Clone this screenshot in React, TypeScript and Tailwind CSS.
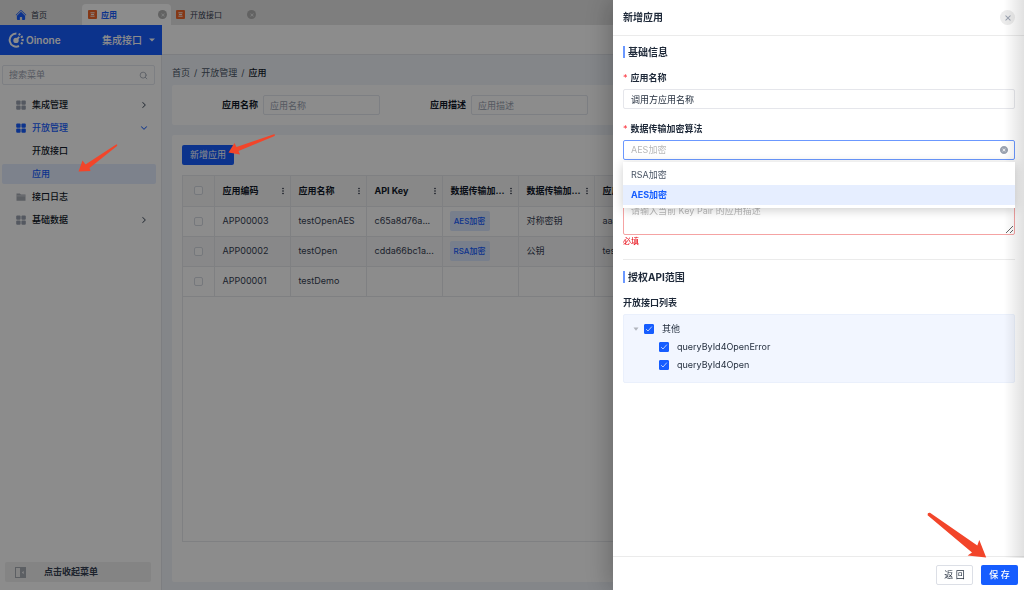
import { useState } from "react"
import { FiSearch } from "react-icons/fi"
import { HiChevronDown, HiChevronRight, HiHome } from "react-icons/hi2"
import { IoMdArrowDropdown } from "react-icons/io"
import { IoCheckmarkSharp, IoClose, IoCloseCircle } from "react-icons/io5"
import { BsThreeDotsVertical } from "react-icons/bs"

const menu = [
  { name: "集成管理", icon: "grid", arrow: "right" },
  { name: "开放管理", icon: "grid", arrow: "down", open: true },
  { name: "开放接口" },
  { name: "应用", active: true },
  { name: "接口日志", icon: "folder" },
  { name: "基础数据", icon: "grid", arrow: "right" },
]

const columns = ["应用编码", "应用名称", "API Key", "数据传输加...", "数据传输加...", "应用描述"]

const rows = [
  { code: "APP00003", name: "testOpenAES", key: "c65a8d76a...", algorithm: "AES加密", type: "对称密钥", desc: "aaa" },
  { code: "APP00002", name: "testOpen", key: "cdda66bc1a...", algorithm: "RSA加密", type: "公钥", desc: "test" },
  { code: "APP00001", name: "testDemo", key: "", algorithm: "", type: "", desc: "" },
]

const algorithms = ["RSA加密", "AES加密"]

const GridIcon = ({ className }: { className: string }) => (
  <svg viewBox="0 0 10 10" className={`size-2.5 ${className}`} fill="currentColor">
    <rect x="0.2" y="0.5" width="4.4" height="4.2" rx="1" />
    <rect x="5.4" y="0.5" width="4.4" height="4.2" rx="1" />
    <rect x="0.2" y="5.5" width="4.4" height="4.2" rx="1" />
    <rect x="5.4" y="5.5" width="4.4" height="4.2" rx="1" />
  </svg>
)

const FolderIcon = () => (
  <svg viewBox="0 0 10 10" className="size-2.5">
    <path d="M0.5 1.4h3.4l1 1.2h4.6v6.2h-9z" fill="#a8adb5" />
    <path d="M0.5 3.9h9" stroke="#e5e7eb" strokeWidth="0.6" />
  </svg>
)

const AppIcon = () => (
  <svg viewBox="0 0 9 9" className="size-[9px]">
    <rect width="9" height="9" rx="1" fill="#f0662b" />
    <path d="M2.4 2.8h4.2M2.9 4.5h3.2M2.4 6.2h4.2" stroke="#fff" strokeWidth="0.9" />
  </svg>
)

const Logo = () => (
  <svg viewBox="0 0 16 16" className="size-4" fill="none" stroke="#fff">
    <path d="M8.4 1.4A6.6 6.6 0 1 0 11 14" strokeWidth="2" />
    <path d="M10.6 2a6.6 6.6 0 0 1 1.8 11" strokeWidth="2.2" strokeDasharray="2 1.3" />
    <circle cx="8" cy="8.4" r="2.7" fill="#fff" stroke="none" />
    <path d="M8 8.4l3.2-3.6" strokeWidth="1.8" />
  </svg>
)

const TabClose = () => (
  <span className="ml-auto flex size-[9px] items-center justify-center rounded-full bg-[#b3b3b3] text-gray-100">
    <IoClose className="size-1.5" />
  </span>
)

const TabBar = () => (
  <nav className="flex h-[25px] shrink-0 items-end bg-[#e6e6e6] text-[8px] text-gray-700">
    <a href="#home" className="flex h-[21px] w-[82px] items-center gap-1 pl-[15px]">
      <HiHome className="size-3 text-[#165dff]" /> 首页
    </a>
    <a href="#app" className="flex h-[21px] w-[89px] items-center gap-1 rounded-t-sm bg-white pl-1.5 pr-1 font-bold text-[#165dff]">
      <AppIcon /> 应用
      <TabClose />
    </a>
    <a href="#api" className="flex h-[21px] w-[85px] items-center gap-[5px] pl-[5px]">
      <AppIcon /> 开放接口
      <TabClose />
    </a>
  </nav>
)

const Sidebar = () => (
  <aside className="flex w-[162px] shrink-0 flex-col border-r border-[#e3e6ec] bg-white">
    <div className="-mr-px flex h-[30px] shrink-0 items-center bg-[#165dff] pl-2 pr-1 text-white">
      <Logo />
      <span className="ml-0.5 text-[10px] font-semibold">Oinone</span>
      <button className="ml-auto flex items-center gap-1 text-[10px] font-medium">
        集成接口 <IoMdArrowDropdown className="size-3" />
      </button>
    </div>

    <label className="ml-0.5 mr-1.5 mt-2.5 flex h-5 items-center rounded-xs border border-[#e3e7ee] px-1.5">
      <input aria-label="搜索菜单" placeholder="搜索菜单" className="min-w-0 flex-1 outline-none placeholder:text-gray-400" />
      <FiSearch className="size-[9px] text-gray-400" />
    </label>

    <ul className="mt-2.5 flex flex-col gap-[3px] pl-0.5 pr-[5px]">
      {menu.map((item, idx) => (
        <li key={idx}>
          <a
            href="#menu"
            className={`flex h-5 items-center rounded-xs pl-3.5 pr-2 font-medium ${item.active ? "bg-[#e3edff]" : ""} ${item.active || item.open ? "text-[#165dff]" : "text-gray-900"}`}
          >
            <span className="w-4">
              {item.icon === "grid" && <GridIcon className={item.open ? "text-[#165dff]" : "text-gray-400"} />}
              {item.icon === "folder" && <FolderIcon />}
            </span>
            {item.name}
            {item.arrow === "right" && <HiChevronRight className="ml-auto size-2 stroke-1 text-gray-600" />}
            {item.arrow === "down" && <HiChevronDown className="ml-auto size-2 stroke-1" />}
          </a>
        </li>
      ))}
    </ul>

    <button className="mb-2 ml-[5px] mr-2.5 mt-auto flex h-5 items-center rounded-xs bg-[#f0f0f0] pl-2.5 font-bold text-gray-700">
      <svg viewBox="0 0 11 11" className="mr-[18px] size-[11px]">
        <rect x="0.5" y="0.5" width="10" height="10" fill="none" stroke="#a8adb5" />
        <path d="M5 0.5h5.5v10H5z" fill="#a8adb5" />
        <path d="M8.6 4L7 5.5 8.6 7z" fill="#fff" />
      </svg>
      点击收起菜单
    </button>
  </aside>
)

const FilterField = ({ label }: { label: string }) => (
  <label className="flex w-[208px] items-center justify-end gap-[5px] font-bold text-gray-900">
    {label}
    <input placeholder={label} className="h-5 w-[117px] rounded-xs border border-[#e3e7ee] px-1.5 font-normal outline-none placeholder:text-gray-400" />
  </label>
)

const AppTable = () => (
  <div className="mt-2.5 flex-1 overflow-hidden border border-[#e7e9ed]">
    <table className="w-full table-fixed border-collapse text-left text-gray-700">
      <colgroup>
        <col className="w-[31px]" />
        <col className="w-[76px]" />
        <col className="w-[76px]" />
        <col className="w-[76px]" />
        <col className="w-[76px]" />
        <col className="w-[76px]" />
        <col />
      </colgroup>
      <thead className="bg-[#f7f7f8] text-gray-900">
        <tr className="h-[30px]">
          <th className="border-b border-r border-[#e7e9ed]">
            <input type="checkbox" aria-label="全选" className="mx-auto block size-[9px] appearance-none rounded-xs border border-[#d6dae2] bg-white" />
          </th>
          {columns.map((col, idx) => (
            <th key={idx} className="border-b border-r border-[#e7e9ed] pl-2 pr-[3px] font-bold">
              <div className="flex items-center justify-between">
                <span className="whitespace-nowrap">{col}</span>
                <BsThreeDotsVertical className="size-2 shrink-0" />
              </div>
            </th>
          ))}
        </tr>
      </thead>
      <tbody>
        {rows.map((row) => (
          <tr key={row.code} className="h-[30px] even:bg-[#f8f8f9]">
            <td className="border-b border-r border-[#e7e9ed]">
              <input type="checkbox" aria-label={row.code} className="mx-auto block size-[9px] appearance-none rounded-xs border border-[#d6dae2] bg-white" />
            </td>
            <td className="border-b border-r border-[#e7e9ed] pl-2">{row.code}</td>
            <td className="border-b border-r border-[#e7e9ed] pl-2">{row.name}</td>
            <td className="border-b border-r border-[#e7e9ed] pl-2">{row.key}</td>
            <td className="border-b border-r border-[#e7e9ed] pl-[7px]">
              {row.algorithm && (
                <span className="flex h-5 w-10 items-center justify-center rounded-xs bg-[#dbe7ff] text-[8px] font-medium text-[#165dff]">
                  {row.algorithm}
                </span>
              )}
            </td>
            <td className="border-b border-r border-[#e7e9ed] pl-2">{row.type}</td>
            <td className="border-b border-r border-[#e7e9ed] pl-2">{row.desc}</td>
          </tr>
        ))}
      </tbody>
    </table>
  </div>
)

const SectionTitle = ({ children }: { children: string }) => (
  <h3 className="border-l-2 border-[#6b98ff] pl-[3px] text-[10px] font-bold leading-3">{children}</h3>
)

const Check = ({ label }: { label: string }) => (
  <label className="flex items-center gap-2">
    <span className="relative size-2.5">
      <input type="checkbox" defaultChecked className="peer block size-2.5 appearance-none rounded-[1px] border border-gray-300 checked:border-[#165dff] checked:bg-[#165dff]" />
      <IoCheckmarkSharp className="pointer-events-none absolute inset-px hidden size-2 stroke-[40px] text-white peer-checked:block" />
    </span>
    {label}
  </label>
)

const Drawer = () => {
  const [algorithm, setAlgorithm] = useState("AES加密")

  return (
    <section className="fixed inset-y-0 right-0 flex w-[411px] max-w-full flex-col bg-white text-gray-800 shadow-[-4px_0_24px_rgba(0,0,0,0.25)]">
      <header className="flex h-9 shrink-0 items-center justify-between border-b border-[#ebebeb] pl-2.5 pr-[9px]">
        <h2 className="text-[10px] font-bold">新增应用</h2>
        <button aria-label="关闭" className="flex size-[15px] items-center justify-center rounded-full bg-[#ececec] text-gray-400">
          <IoClose className="size-2.5" />
        </button>
      </header>

      <div className="flex-1 overflow-hidden pl-2.5 pr-[9px] pt-2.5 leading-3">
        <SectionTitle>基础信息</SectionTitle>

        <label htmlFor="name" className="mt-3.5 block font-bold">
          <span className="mr-[3px] font-normal text-red-500">*</span>应用名称
        </label>
        <input id="name" defaultValue="调用方应用名称" className="mt-[5px] block h-5 w-full rounded-xs border border-[#e5e6eb] px-[7px] outline-none" />

        <label htmlFor="algorithm" className="mt-3.5 block font-bold">
          <span className="mr-[3px] font-normal text-red-500">*</span>数据传输加密算法
        </label>
        <div className="relative mt-[5px]">
          <select
            id="algorithm"
            value={algorithm}
            onChange={(e) => setAlgorithm(e.target.value)}
            className="block h-5 w-full appearance-none rounded-xs border border-[#6b98ff] px-[7px] text-[#b8b8b8] outline-none"
          >
            {algorithms.map((item) => (
              <option key={item}>{item}</option>
            ))}
          </select>
          <IoCloseCircle className="absolute right-1.5 top-[5px] size-2.5 text-gray-400" />

          {/* Options */}
          <ul className="absolute inset-x-0 top-[22px] z-10 bg-white py-[3px] shadow-[0_2px_10px_rgba(0,0,0,0.2)]">
            {algorithms.map((item) => (
              <li key={item}>
                <button
                  onClick={() => setAlgorithm(item)}
                  className={`block h-5 w-full px-2 text-left ${item === algorithm ? "bg-[#e6eeff] font-bold text-[#165dff]" : "text-gray-600"}`}
                >
                  {item}
                </button>
              </li>
            ))}
          </ul>
        </div>

        <textarea
          aria-label="应用描述"
          placeholder="请输入当前 Key Pair 的应用描述"
          className="mt-[42px] block h-[33px] w-full rounded-xs border border-[#f5a3a3] px-[7px] py-0.5 outline-none placeholder:text-[#b8b8b8]"
        />
        <p className="text-[8px] text-red-600">必填</p>

        <hr className="mb-[11px] mt-3 border-[#ebebeb]" />

        <SectionTitle>授权API范围</SectionTitle>
        <h4 className="mt-3.5 font-bold">开放接口列表</h4>
        <ul className="mt-[5px] rounded-xs border border-[#eaf0fc] bg-[#f2f6ff] pb-2 pl-2 pt-[5px]">
          <li className="flex h-[18px] items-center gap-1">
            <svg viewBox="0 0 8 8" className="size-2" fill="#b0b4bc"><path d="M1.5 2.5h5L4 5.8z" /></svg>
            <Check label="其他" />
          </li>
          <li className="flex h-[18px] items-center pl-[27px]"><Check label="queryById4OpenError" /></li>
          <li className="flex h-[18px] items-center pl-[27px]"><Check label="queryById4Open" /></li>
        </ul>
      </div>

      <footer className="flex h-[34px] shrink-0 items-center justify-end gap-2 border-t border-[#ebebeb] pr-1.5 pt-0.5">
        <button className="h-5 w-[37px] rounded-xs border border-[#dcdfe6]">返 回</button>
        <button className="h-5 w-[37px] rounded-xs bg-[#165dff] font-medium text-white">保 存</button>
      </footer>

      <div className="pointer-events-none absolute bottom-8 right-0 top-0 w-5 bg-linear-to-l from-black/12 to-transparent" />
    </section>
  )
}

const App = () => {
  return (
    <div className="flex h-screen flex-col overflow-hidden bg-[#f0f4fa] font-['Inter','Noto_Sans_CJK_SC',sans-serif] text-[9px]">
      <TabBar />

      <div className="flex min-h-0 flex-1">
        <Sidebar />

        <main className="flex min-w-0 flex-1 flex-col">
          <div className="h-[30px] shrink-0 border-b border-[#e3e6ec] bg-white" />

          <div className="flex min-h-0 flex-1 flex-col px-2.5 pb-2">
            <nav className="flex h-[30px] shrink-0 items-center gap-1 pt-1.5 text-gray-600">
              <a href="#home">首页</a> <span>/</span>
              <a href="#open">开放管理</a> <span>/</span>
              <span className="font-medium text-gray-900">应用</span>
            </nav>

            <form className="flex h-10 shrink-0 items-center rounded-xs bg-white">
              <FilterField label="应用名称" />
              <FilterField label="应用描述" />
            </form>

            <div className="mt-2.5 flex min-h-0 flex-1 flex-col rounded-xs bg-white px-2.5 pb-10 pt-2.5">
              <button className="h-5 w-[52px] rounded-xs bg-[#165dff] text-white">新增应用</button>
              <AppTable />
            </div>
          </div>
        </main>
      </div>

      <div className="fixed inset-0 bg-black/45" />
      <Drawer />

      {/* Step arrows */}
      <svg className="pointer-events-none absolute left-[78px] top-[144px] h-7 w-10" viewBox="0 0 40 28" fill="#f2452a">
        <path d="M0.5 27.5L4.5 16.5L7.5 20.5L38.5 0.3Q40 0.8 39 2L11.5 24L12.5 27Z" />
      </svg>
      <svg className="pointer-events-none absolute left-[228px] top-[134px] h-[21px] w-12" viewBox="0 0 48 21" fill="#f2452a">
        <path d="M0.5 18.5L6.5 9L8.5 13L46 0.3Q47.8 0.5 46.6 1.9L10.5 17L12 20.5Z" />
      </svg>
      <svg className="pointer-events-none fixed bottom-8 right-[37px] h-[46px] w-[60px]" viewBox="0 0 60 46" fill="#f2452a">
        <path d="M59.2 45.4L52.3 28L50.3 33.5L3 0.8Q0.2 0.4 0.6 3.2L45 40.5L40.6 43.6Z" />
      </svg>
    </div>
  )
}
export default App
